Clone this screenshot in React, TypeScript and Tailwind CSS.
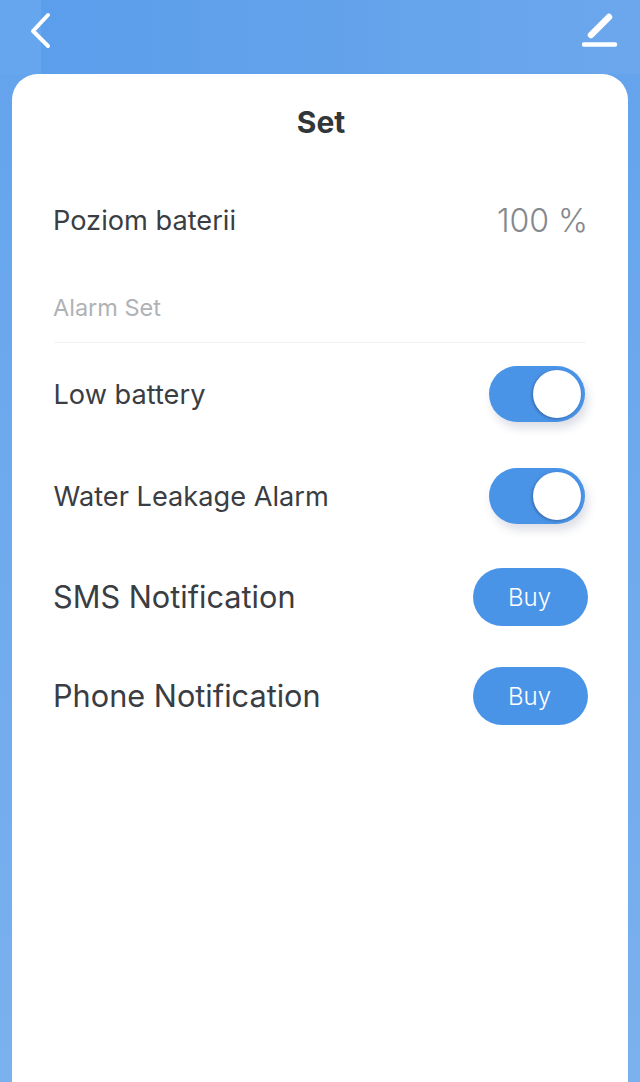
import React from 'react';

const Toggle = () => (
  <div className="flex h-[56px] w-[96px] items-center justify-end rounded-full bg-[#4a94e8] pr-[4px] shadow-[3px_6px_10px_rgba(60,70,110,0.18)]">
    <div className="h-[48px] w-[48px] rounded-full bg-white shadow-[-1px_1px_3px_rgba(30,60,110,0.5)]" />
  </div>
);

const BuyButton = () => (
  <button className="flex h-[58px] w-[115px] items-center justify-center rounded-full bg-[#4a94e8] pr-[2px] pt-[1px] text-[24px] font-light text-white">
    Buy
  </button>
);

const App: React.FC = () => {
  return (
    <div className="flex h-[1082px] w-[640px] flex-col overflow-hidden bg-gradient-to-b from-[#63a3ed] to-[#7ab1ee] font-['Inter','Noto_Sans',sans-serif]">
      <div className="flex h-[74px] items-start justify-between bg-[linear-gradient(90deg,#66a6ee_41px,#5b9eeb_41px,#6ca7ec_100%)] pl-[29px] pr-[22px] pt-[12px]">
        <svg width="24" height="38" viewBox="0 0 24 38" fill="none" stroke="white" strokeWidth="4" strokeLinecap="round" strokeLinejoin="round">
          <path d="M19 3 L4 19 L19 34" />
        </svg>
        <svg width="36" height="38" viewBox="0 0 36 38" fill="none" stroke="white" strokeLinecap="round">
          <path d="M9 23 L27 5" strokeWidth="6.5" />
          <path d="M2 32.5 H33" strokeWidth="4.5" />
        </svg>
      </div>

      <div className="mx-[12px] flex-1 rounded-t-[26px] bg-white pl-[42px] pr-[40px] text-[#3a3d42]">
        <h1 className="mt-[29px] text-center text-[30px] font-bold leading-[38px] text-[#333639]">Set</h1>

        <div className="-ml-[1px] mt-[60px] flex h-[40px] items-center justify-between">
          <span className="text-[27.2px]">Poziom baterii</span>
          <span className="text-[32px] font-light text-[#85888c]">100 %</span>
        </div>

        <div className="mr-[2px] mt-[53px] border-b border-[#f1f2f4] pb-[20px] text-[23.5px] leading-[28px] text-[#b0b2b5]">
          <span className="-ml-[1px] block">Alarm Set</span>
        </div>

        <div className="mt-[23px] flex items-center justify-between pr-[3px]">
          <span className="-ml-[0.5px] pt-[3px] text-[27.2px]">Low battery</span>
          <Toggle />
        </div>
        <div className="mt-[46px] flex items-center justify-between pr-[3px]">
          <span className="-ml-[0.5px] pt-[3px] text-[27.2px]">Water Leakage Alarm</span>
          <Toggle />
        </div>
        <div className="mt-[44px] flex items-center justify-between">
          <span className="-ml-[1px] text-[30.7px]">SMS Notification</span>
          <BuyButton />
        </div>
        <div className="mt-[41px] flex items-center justify-between">
          <span className="-ml-[1px] text-[30.7px]">Phone Notification</span>
          <BuyButton />
        </div>
      </div>
    </div>
  );
};

export default App;
